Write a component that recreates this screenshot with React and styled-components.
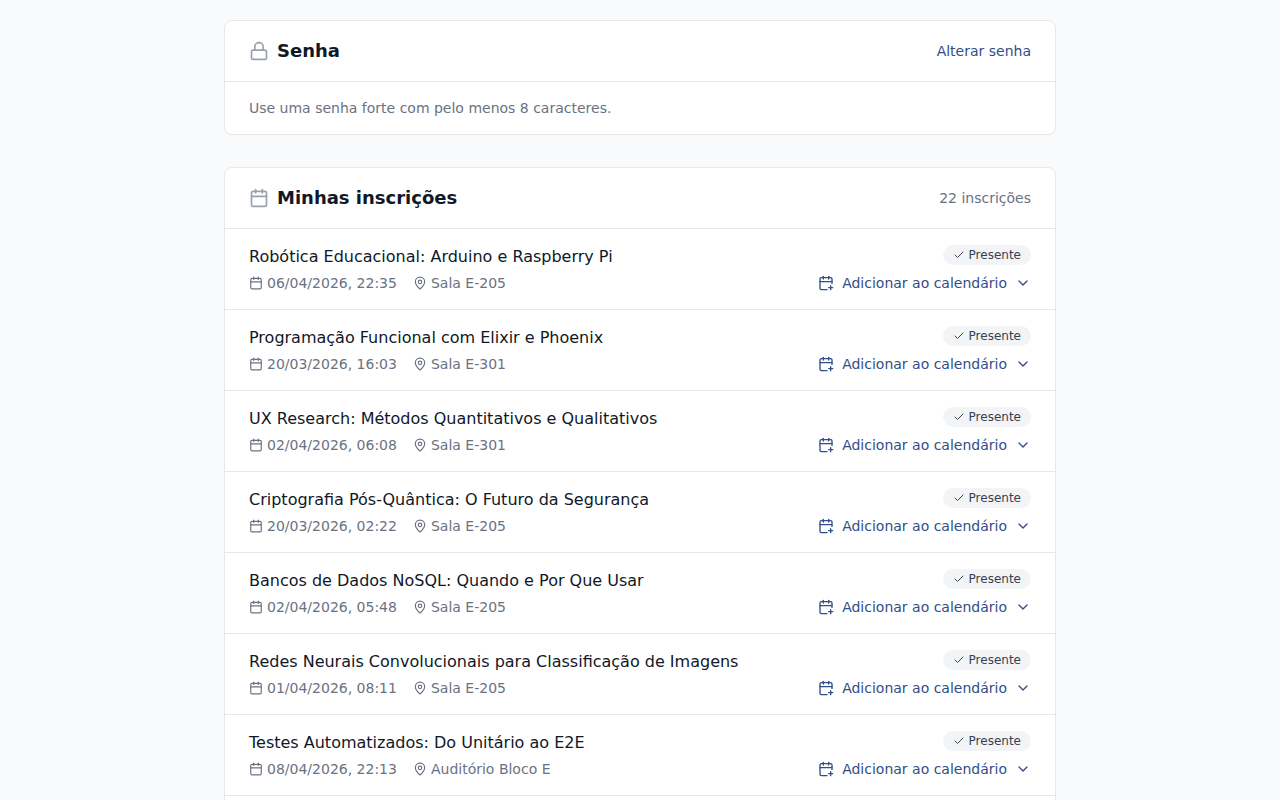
import React from 'react';
import styled, { createGlobalStyle } from 'styled-components';
import { Calendar, CalendarPlus, Check, ChevronDown, Lock, MapPin } from 'lucide-react';

const total = 22;

const events = [
    { id: 1, title: 'Robótica Educacional: Arduino e Raspberry Pi', date: '06/04/2026, 22:35', place: 'Sala E-205' },
    { id: 2, title: 'Programação Funcional com Elixir e Phoenix', date: '20/03/2026, 16:03', place: 'Sala E-301' },
    { id: 3, title: 'UX Research: Métodos Quantitativos e Qualitativos', date: '02/04/2026, 06:08', place: 'Sala E-301' },
    { id: 4, title: 'Criptografia Pós-Quântica: O Futuro da Segurança', date: '20/03/2026, 02:22', place: 'Sala E-205' },
    { id: 5, title: 'Bancos de Dados NoSQL: Quando e Por Que Usar', date: '02/04/2026, 05:48', place: 'Sala E-205' },
    { id: 6, title: 'Redes Neurais Convolucionais para Classificação de Imagens', date: '01/04/2026, 08:11', place: 'Sala E-205' },
    { id: 7, title: 'Testes Automatizados: Do Unitário ao E2E', date: '08/04/2026, 22:13', place: 'Auditório Bloco E' },
];

const Registration = ({ title, date, place }) => (
    <Row>
        <Info>
            <Title>{title}</Title>
            <Meta>
                <MetaItem><Calendar size={14} />{date}</MetaItem>
                <MetaItem><MapPin size={14} />{place}</MetaItem>
            </Meta>
        </Info>
        <Actions>
            <Badge><Check size={12} />Presente</Badge>
            <TextButton type="button" aria-haspopup="menu">
                <CalendarPlus size={16} />
                Adicionar ao calendário
                <ChevronDown size={16} />
            </TextButton>
        </Actions>
    </Row>
);

const App = () => (
    <>
        <GlobalStyle />
        <Page>
            <Card>
                <CardHeader>
                    <Heading><Lock size={20} />Senha</Heading>
                    <TextButton type="button">Alterar senha</TextButton>
                </CardHeader>
                <Hint>Use uma senha forte com pelo menos 8 caracteres.</Hint>
            </Card>
            <Card>
                <CardHeader>
                    <Heading><Calendar size={20} />Minhas inscrições</Heading>
                    <Count>{total} inscrições</Count>
                </CardHeader>
                <List>
                    {events.map(event => <Registration key={event.id} {...event} />)}
                </List>
            </Card>
        </Page>
    </>
);

export default App;

const GlobalStyle = createGlobalStyle`
    *, *::before, *::after {
        box-sizing: border-box;
    }
    body {
        margin: 0;
        background: #f9fafb;
        color: #101828;
        font-family: 'DejaVu Sans', sans-serif;
        font-size: 14px;
        line-height: 20px;
    }
    svg {
        flex-shrink: 0;
    }
`;
const Page = styled.main`
    display: flex;
    flex-direction: column;
    gap: 32px;
    max-width: 896px;
    margin: 0 auto;
    padding: 20px 32px 32px;
`;
const Card = styled.section`
    background: #ffffff;
    border: 1px solid #e5e7eb;
    border-radius: 8px;
`;
const CardHeader = styled.header`
    display: flex;
    align-items: center;
    justify-content: space-between;
    padding: 16px 24px;
    border-bottom: 1px solid #e5e7eb;
`;
const Heading = styled.h2`
    display: flex;
    align-items: center;
    gap: 8px;
    margin: 0;
    font-size: 18px;
    font-weight: 600;
    line-height: 28px;

    svg {
        color: #99a1af;
    }
`;
const Hint = styled.p`
    margin: 0;
    padding: 16px 24px;
    color: #6a7282;
`;
const Count = styled.span`
    color: #6a7282;
`;
const TextButton = styled.button`
    display: inline-flex;
    align-items: center;
    gap: 8px;
    padding: 0;
    border: none;
    background: none;
    color: #324d88;
    font: inherit;
    cursor: pointer;

    &:hover {
        text-decoration: underline;
    }
`;
const List = styled.ul`
    margin: 0;
    padding: 0 0 16px;
    list-style: none;
`;
const Row = styled.li`
    display: flex;
    justify-content: space-between;
    gap: 16px;
    padding: 16px 24px;
    border-bottom: 1px solid #e5e7eb;
`;
const Info = styled.div`
    display: flex;
    flex-direction: column;
    gap: 4px;
    min-width: 0;
`;
const Title = styled.h3`
    margin: 0;
    font-size: 16px;
    font-weight: 500;
    line-height: 24px;
`;
const Meta = styled.div`
    display: flex;
    flex-wrap: wrap;
    gap: 16px;
    color: #6a7282;
`;
const MetaItem = styled.span`
    display: flex;
    align-items: center;
    gap: 4px;
`;
const Actions = styled.div`
    display: flex;
    flex-direction: column;
    align-items: flex-end;
    gap: 8px;
    flex-shrink: 0;
`;
const Badge = styled.span`
    display: inline-flex;
    align-items: center;
    gap: 4px;
    padding: 2px 10px;
    border-radius: 10px;
    background: #f3f4f6;
    color: #364153;
    font-size: 12px;
    font-weight: 500;
    line-height: 16px;
`;
